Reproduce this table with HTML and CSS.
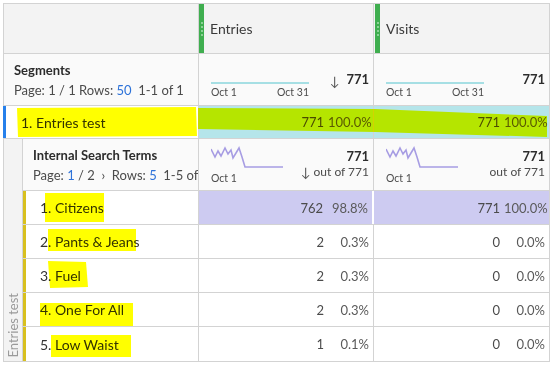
FILE: index.html
```html
<!DOCTYPE html>
<html>
<head>
<meta charset="utf-8">
<link rel="stylesheet" href="styles.css">
</head>
<body>
<div class="table">
  <div class="row head">
    <div class="c1"></div>
    <div class="c2 colhead"><span class="grip"><i></i><i></i><i></i><i></i></span><span>Entries</span></div>
    <div class="c3 colhead"><span class="grip"><i></i><i></i><i></i><i></i></span><span>Visits</span></div>
  </div>
  <div class="row section">
    <div class="c1 sec-title">
      <div class="bold">Segments</div>
      <div class="pager">Page: 1 / 1 Rows: <span class="link">50</span>&nbsp; 1-1 of 1</div>
    </div>
    <div class="c2 summ">
      <div class="spark">
        <div class="line cyan"></div>
        <div class="dates"><span>Oct 1</span><span>Oct 31</span></div>
      </div>
      <div class="arrow">↓</div>
      <div class="tot"><div class="bold">771</div></div>
    </div>
    <div class="c3 summ">
      <div class="spark">
        <div class="line cyan"></div>
        <div class="dates"><span>Oct 1</span><span>Oct 31</span></div>
      </div>
      <div class="tot"><div class="bold">771</div></div>
    </div>
  </div>
  <div class="row seg">
    <div class="c1 seglabel">1. Entries test</div>
    <div class="c2 num cyanbg"><span class="n">771</span><span class="p">100.0%</span></div>
    <div class="c3 num cyanbg"><span class="n">771</span><span class="p">100.0%</span></div>
  </div>
  <div class="nested">
    <div class="strip"><span>Entries test</span></div>
    <div class="inner">
      <div class="row section sub">
        <div class="c1 sec-title">
          <div class="bold">Internal Search Terms</div>
          <div class="pager">Page: <span class="link">1</span> / 2 &nbsp;›&nbsp; Rows: <span class="link">5</span>&nbsp; 1-5 of</div>
        </div>
        <div class="c2 summ">
          <div class="spark small">
            <svg width="72" height="26" viewBox="0 0 72 26"><polyline fill="none" stroke="#a79de3" stroke-width="1.6" points="0,4 4,12 7,6 10,11 14,3 17,9 20,5 22,13 25,8 28,3 31,12 34,22 72,22"/></svg>
            <div class="dates"><span>Oct 1</span></div>
          </div>
          <div class="arrow low">↓</div>
          <div class="tot"><div class="bold">771</div><div class="of">out of 771</div></div>
        </div>
        <div class="c3 summ">
          <div class="spark small">
            <svg width="72" height="26" viewBox="0 0 72 26"><polyline fill="none" stroke="#a79de3" stroke-width="1.6" points="0,4 4,12 7,6 10,11 14,3 17,9 20,5 22,13 25,8 28,3 31,12 34,22 72,22"/></svg>
            <div class="dates"><span>Oct 1</span></div>
          </div>
          <div class="tot"><div class="bold">771</div><div class="of">out of 771</div></div>
        </div>
      </div>
      <div class="row item">
        <div class="c1 lbl">1. Citizens</div>
        <div class="c2 num purple"><span class="n">762</span><span class="p">98.8%</span></div>
        <div class="c3 num purple"><span class="n">771</span><span class="p">100.0%</span></div>
      </div>
      <div class="row item">
        <div class="c1 lbl">2. Pants &amp; Jeans</div>
        <div class="c2 num"><span class="n">2</span><span class="p">0.3%</span></div>
        <div class="c3 num"><span class="n">0</span><span class="p">0.0%</span></div>
      </div>
      <div class="row item">
        <div class="c1 lbl">3. Fuel</div>
        <div class="c2 num"><span class="n">2</span><span class="p">0.3%</span></div>
        <div class="c3 num"><span class="n">0</span><span class="p">0.0%</span></div>
      </div>
      <div class="row item">
        <div class="c1 lbl">4. One For All</div>
        <div class="c2 num"><span class="n">2</span><span class="p">0.3%</span></div>
        <div class="c3 num"><span class="n">0</span><span class="p">0.0%</span></div>
      </div>
      <div class="row item last">
        <div class="c1 lbl">5. Low Waist</div>
        <div class="c2 num"><span class="n">1</span><span class="p">0.1%</span></div>
        <div class="c3 num"><span class="n">0</span><span class="p">0.0%</span></div>
      </div>
    </div>
  </div>
</div>
<svg class="marks" width="556" height="373" viewBox="0 0 556 373">
  <g fill="#ffff00">
    <polygon points="17,108 196,107 197,136 18,137"/>
    <polygon points="198,108 375,109 547,116 547,137 375,132 198,129"/>
    <polygon points="45,193 104,193 104,222 45,222"/>
    <polygon points="48,229 136,229 136,251 48,251"/>
    <polygon points="48,261 86,262 88,287 50,288"/>
    <polygon points="40,303 133,303 133,326 40,326"/>
    <polygon points="51,335 131,335 131,357 51,357"/>
  </g>
</svg>
</body>
</html>
```
FILE: styles.css
```css
* { box-sizing: border-box; }
html, body { margin: 0; padding: 0; }
body {
  position: relative;
  width: 556px;
  height: 373px;
  background: #fff;
  font-family: Lato, "Noto Sans", sans-serif;
  font-size: 13px;
  color: #4b4b4b;
  overflow: hidden;
}
.table {
  margin: 3px 0 0 3px;
  width: 547px;
  border: 1px solid #d3d3d3;
  border-bottom: none;
}
.row {
  display: grid;
  grid-template-columns: 195px 175px 175px;
  border-bottom: 1px solid #d3d3d3;
}
.row > div { min-width: 0; }
.c1, .c2 { border-right: 1px solid #d3d3d3; }
.head { height: 50px; background: #f3f3f3; }
.colhead { display: flex; align-items: center; font-size: 14px; color: #3a3a3a; }
.c3.colhead { padding-left: 1px; }
.grip {
  width: 5px; align-self: stretch; background: #3fae4f;
  display: flex; flex-direction: column; justify-content: center; align-items: center; gap: 2px;
  margin-right: 6px;
}
.grip i { width: 2px; height: 2px; border-radius: 1px; background: #a7dcae; }
.section { height: 52px; background: #fafafa; }
.sec-title { padding: 6px 0 0 10px; line-height: 20px; white-space: nowrap; overflow: hidden; }
.bold { font-weight: bold; color: #2c2c2c; }
.pager { color: #4b4b4b; }
.link { color: #2d72d9; }
.summ { display: flex; align-items: flex-start; padding: 0 4px 0 12px; position: relative; white-space: nowrap; }
.spark { width: 98px; flex: none; margin-top: 28px; }
.line.cyan { height: 2px; background: #a6dfe4; }
.dates { display: flex; justify-content: space-between; font-size: 10.5px; color: #4b4b4b; margin-top: 2px; line-height: 12px; }
.spark.small { width: 72px; margin-top: 6px; }
.spark.small svg { display: block; }
.spark.small .dates { margin-top: 1px; }
.arrow { margin: 19px 0 0 21px; font-size: 13px; color: #555; flex: none; }
.arrow.low { margin: 25px 0 0 18px; }
.tot { margin-left: auto; text-align: right; padding-top: 18px; line-height: 15px; flex: none; }
.sub .tot { padding-top: 10px; }
.of { color: #4b4b4b; font-size: 12px; }
.seg { height: 33px; }
.seglabel {
  border-left: 3px solid #2680eb;
  margin-left: -1px;
  display: flex; align-items: center; padding-left: 15px; font-size: 14px; color: #333;
}
.num { display: flex; justify-content: flex-end; align-items: center; padding-right: 4px; font-size: 13px; color: #4b4b4b; }
.num .n { text-align: right; }
.num .p { width: 41px; margin-left: 4px; text-align: right; color: #5a5a5a; }
.cyanbg { background: #b5e5ea; }
.purple { background: #cdcbf1; }
.c2.purple { border-right: 2px solid #fff; }
.nested { display: flex; border-bottom: 1px solid #d3d3d3; }
.strip {
  width: 19px; flex: none; background: #f3f3f3; border-right: 1px solid #d3d3d3;
  display: flex; flex-direction: column; justify-content: flex-end; align-items: center;
  padding-bottom: 3px;
}
.strip span {
  writing-mode: vertical-rl; transform: rotate(180deg);
  color: #9a9a9a; font-size: 13px; line-height: 14px; white-space: nowrap;
}
.inner { flex: 1; }
.inner .row { grid-template-columns: 176px 175px 175px; }
.inner .row.last { border-bottom: none; }
.item { height: 34px; }
.lbl {
  border-left: 3px solid #d8c01f;
  display: flex; align-items: center; padding-left: 14px; font-size: 14px; color: #333;
}
.marks { position: absolute; left: 0; top: 0; mix-blend-mode: multiply; pointer-events: none; }
```
